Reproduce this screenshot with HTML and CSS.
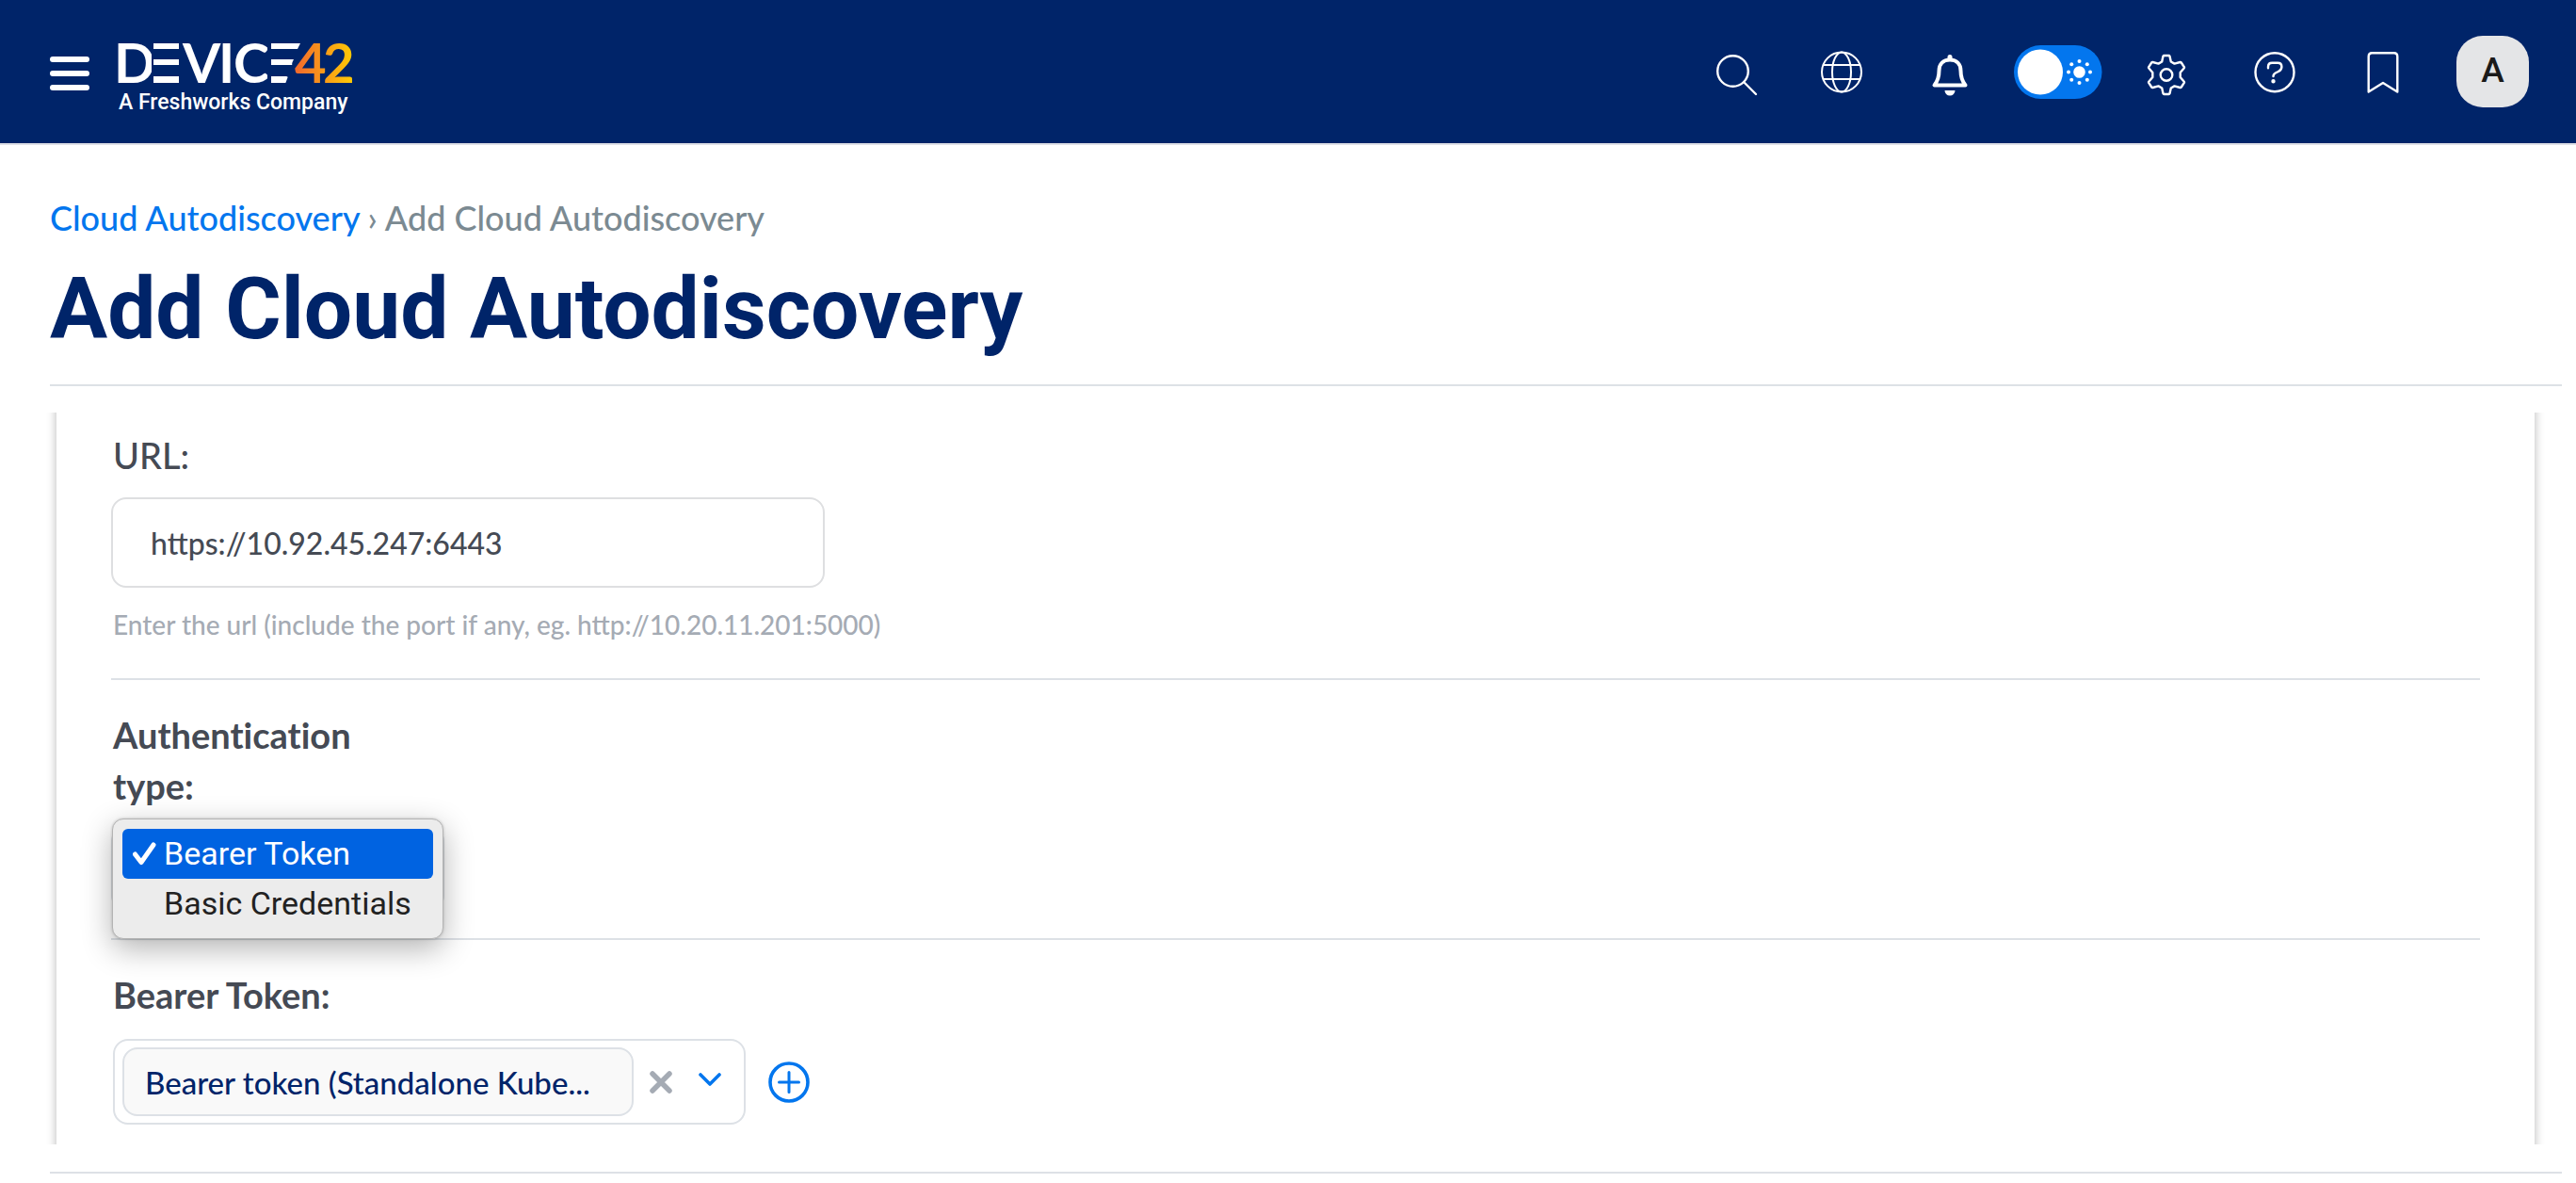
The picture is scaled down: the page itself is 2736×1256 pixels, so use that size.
FILE: index.html
```html
<!DOCTYPE html>
<html lang="en">
<head>
<meta charset="utf-8">
<meta name="viewport" content="width=device-width, initial-scale=1">
<title>Add Cloud Autodiscovery</title>
<link rel="stylesheet" href="styles.css">
</head>
<body>
<header class="topbar">
  <button class="icon-button menu" type="button" aria-label="Menu">
    <svg width="42" height="36" viewBox="0 0 42 36" fill="#fff"><rect width="42" height="6" rx="3"/><rect y="15" width="42" height="6" rx="3"/><rect y="30" width="42" height="6" rx="3"/></svg>
  </button>
  <a class="logo" href="#" aria-label="Device42, A Freshworks Company">
    <svg width="266" height="92" viewBox="-10 0 266 92">
      <defs>
        <linearGradient id="sunrise" gradientUnits="userSpaceOnUse" x1="190" y1="0" x2="250" y2="0">
          <stop offset="0" stop-color="#f26b2c"/><stop offset="1" stop-color="#ffcb05"/>
        </linearGradient>
      </defs>
      <text class="wordmark" y="58" x="-4 33 69 107 123 158" fill="#fff">DEVICE</text>
      <g fill="#002469">
        <rect x="36" y="22" width="31" height="11"/><rect x="36" y="39" width="31" height="12"/>
        <rect x="160" y="22" width="34" height="11"/><rect x="160" y="39" width="34" height="12"/>
        <rect x="36" y="14" width="2" height="46"/><rect x="159" y="14" width="4" height="46"/>
        <polygon points="192,59 178,59 181,51 192,51"/>
      </g>
      <g fill="#fff">
        <rect x="38" y="16" width="27" height="6"/><rect x="38" y="33" width="27" height="6"/><rect x="38" y="51" width="27" height="7"/>
        <polygon points="163,16 194,16 191,22 163,22"/><polygon points="163,33 187,33 184,39 163,39"/><polygon points="163,51 180,51 177,58 163,58"/>
      </g>
      <text class="wordmark" y="58" x="188 218" fill="url(#sunrise)">42</text>
      <text class="tagline" x="1" y="86" fill="#fff">A Freshworks Company</text>
    </svg>
  </a>
  <nav class="tools" aria-label="Tools">
    <button class="icon-button tool" type="button" aria-label="Search">
      <svg width="52" height="52" viewBox="0 0 52 52" fill="none" stroke="#fff" stroke-width="2.4" stroke-linecap="round"><circle cx="25.500" cy="25.500" r="16.300"/><path d="M37.500 37.500 50 50"/></svg>
    </button>
    <button class="icon-button tool" type="button" aria-label="Language">
      <svg width="44" height="52" viewBox="0 0 44 52" fill="none" stroke="#fff" stroke-width="2"><circle cx="22" cy="26.500" r="21"/><ellipse cx="22" cy="26.500" rx="10" ry="21"/><path d="M2 19h40M2 34h40"/></svg>
    </button>
    <button class="icon-button tool" type="button" aria-label="Notifications">
      <svg width="44" height="52" viewBox="0 0 44 52" fill="none"><path d="M22 13.500c-7.500 0-11.500 5-11.500 11.500 0 7-1 10.500-5 15.500h33c-4-5-5-8.500-5-15.500 0-6.500-4-11.500-11.500-11.500z" stroke="#fff" stroke-width="4" stroke-linejoin="round"/><path d="M19.500 13v-2.500a2.500 2.500 0 0 1 5 0V13zM16.500 46h11a5.500 5.500 0 0 1-11 0z" fill="#fff"/></svg>
    </button>
    <label class="tool">
      <input class="theme-input" type="checkbox" aria-label="Light theme" checked>
      <svg width="94" height="60" viewBox="0 -2 94 60" fill="#fff"><rect width="93.500" height="57" rx="28.500" fill="#0376ee"/><circle cx="28" cy="28.500" r="24"/><circle cx="69.500" cy="28.500" r="6.300"/><circle cx="69.500" cy="17" r="2"/><circle cx="69.500" cy="40" r="2"/><circle cx="58" cy="28.500" r="2"/><circle cx="81" cy="28.500" r="2"/><circle cx="61.200" cy="20.200" r="2"/><circle cx="77.800" cy="20.200" r="2"/><circle cx="61.200" cy="36.800" r="2"/><circle cx="77.800" cy="36.800" r="2"/></svg>
    </label>
    <button class="icon-button tool" type="button" aria-label="Settings">
      <svg width="44" height="52" viewBox="0 0 44 52" fill="none" stroke="#fff" stroke-width="2.400" stroke-linejoin="round"><circle cx="22" cy="29.500" r="6.300"/><path d="M18.500 9.500Q18.800 9 19.500 9h5q.700 0 1 .700L26.800 15.500 30.500 17.600 36.500 16q.800-.200 1.300.500l3 4.600q.400.800-.200 1.400L36.700 27v5l3.900 4.500q.600.600.200 1.400l-3 4.600q-.500.700-1.300.500L30.500 41.400 26.800 43.500 25.500 49.300q-.300.700-1 .700h-5q-.700 0-1-.700L17.200 43.500 13.500 41.400 7.500 43q-.800.200-1.300-.500l-3-4.600q-.400-.800.200-1.400L7.300 32v-5L3.400 22.500q-.600-.600-.200-1.400l3-4.600q.500-.700 1.300-.500L13.500 17.600 17.200 15.500z"/></svg>
    </button>
    <button class="icon-button tool" type="button" aria-label="Help">
      <svg width="44" height="52" viewBox="0 0 44 52" fill="none" stroke="#fff" stroke-width="2.400" stroke-linecap="round" stroke-linejoin="round"><circle cx="22" cy="26.700" r="20.500"/><path d="M15 22.200v-1.200q0-4.200 4.200-4.200h6q4.200 0 4.200 4.200 0 3.200-3.600 5l-2.600 1.300q-2.700 1.400-2.700 3.700"/><circle cx="20.500" cy="36.300" r="1" fill="#fff"/></svg>
    </button>
    <button class="icon-button tool" type="button" aria-label="Bookmarks">
      <svg width="44" height="52" viewBox="0 0 44 52" fill="none" stroke="#fff" stroke-width="2.400" stroke-linejoin="round"><path d="M6.700 47.500V10q0-3.700 3.700-3.700h23.200q3.700 0 3.700 3.700v37.500L22 38z"/></svg>
    </button>
    <button class="icon-button tool account" type="button" aria-label="Account"><span class="avatar">A</span></button>
  </nav>
</header>
<main class="page">
  <nav class="breadcrumb" aria-label="Breadcrumb"><a href="#">Cloud Autodiscovery</a><span>›</span><span>Add Cloud Autodiscovery</span></nav>
  <h1>Add Cloud Autodiscovery</h1>
  <div class="viewport">
    <form class="panel">
      <div class="row">
        <label class="optional" for="url">URL:</label>
        <input class="url" id="url" type="text" value="https://10.92.45.247:6443" aria-describedby="url-hint">
        <p class="hint" id="url-hint">Enter the url (include the port if any, eg. http://10.20.11.201:5000)</p>
      </div>
      <div class="row auth">
        <label for="auth">Authentication type:</label>
        <div class="picker">
          <select id="auth"><option>Bearer Token</option><option>Basic Credentials</option></select>
          <ul class="options" role="listbox" aria-label="Authentication type">
            <li class="selected" role="option" aria-selected="true"><svg width="25" height="25" viewBox="0 0 25 25" fill="none" stroke="#fff" stroke-width="5" stroke-linecap="round" stroke-linejoin="round"><path d="M2.500 13 9 21.500 22 3"/></svg>Bearer Token</li>
            <li role="option" aria-selected="false">Basic Credentials</li>
          </ul>
        </div>
      </div>
      <div class="row token">
        <label for="token">Bearer Token:</label>
        <div class="token-line">
          <div class="token-box">
            <input class="chip" id="token" type="text" value="Bearer token (Standalone Kube..." readonly>
            <button class="icon-button" type="button" aria-label="Clear"><svg width="26" height="26" viewBox="0 0 26 26" stroke="#a5abb4" stroke-width="5.500" stroke-linecap="round"><path d="M4 4l18 18M22 4 4 22"/></svg></button>
            <button class="icon-button expand" type="button" aria-label="Show options"><svg width="26" height="24" viewBox="0 0 26 24" fill="none" stroke="#0376ee" stroke-width="3.600" stroke-linecap="round" stroke-linejoin="round"><path d="M3 4l10 10L23 4"/></svg></button>
          </div>
          <button class="icon-button" type="button" aria-label="Add token"><svg width="44" height="44" viewBox="0 0 44 44" fill="none" stroke="#0376ee" stroke-width="3.600" stroke-linecap="round"><circle cx="22" cy="22" r="20"/><path d="M22 11.500v21M11.500 22h21" stroke-width="3"/></svg></button>
        </div>
      </div>
    </form>
  </div>
</main>
</body>
</html>
```
FILE: styles.css
```css
* { box-sizing: border-box; }
body { margin: 0; background: #fff; color: #454a54; font-family: Lato, sans-serif; }
svg { display: block; }

.icon-button { display: flex; align-items: center; justify-content: center; padding: 0; border: 0; background: none; cursor: pointer; }

.topbar { display: flex; align-items: center; height: 154px; padding: 0 29px 0 53px; background: #002469; border-bottom: 2px solid #dee0e6; }
.menu { margin-top: 4px; }
.logo { margin-left: 20px; }
.wordmark { font: 700 58px Lato, sans-serif; }
.tagline { font: 500 23px Roboto, sans-serif; }
.tools { display: flex; align-items: center; margin-left: auto; }
.tool { display: flex; justify-content: center; width: 115px; }
.theme-input { appearance: none; width: 0; height: 0; margin: 0; }
.account { width: 119px; }
.avatar { width: 77px; height: 76px; border-radius: 28px; background: #e4e5e7; color: #1a1a1a; font: 500 37px/74px Roboto, sans-serif; text-align: center; }

.page { padding: 55px 15px 10px 53px; }
.breadcrumb { display: flex; gap: 8px; font-size: 36px; line-height: 44px; color: #7b8a92; font-weight: 500; }
.breadcrumb a { color: #0376ee; text-decoration: none; }
h1 { margin: 21px 0 0; padding-bottom: 26px; color: #002469; font: 700 91px/108px Roboto, sans-serif; }

.viewport { padding: 28px 29px 29px 7px; border: solid #dde1e6; border-width: 2px 0; }
.panel { margin: -28px 0 -29px; padding: 46px 58px 50px; box-shadow: 0 0 10px rgba(0, 0, 0, 0.28); clip-path: inset(28px -16px 29px); }

.row { display: flex; flex-direction: column; align-items: flex-start; padding-bottom: 40px; border-bottom: 2px solid #dde1e6; }
.row label { padding-left: 2px; font-size: 38px; line-height: 54px; font-weight: 700; font-variant-ligatures: none; }
.row .optional { font-weight: 500; }
.row.auth { padding: 31px 0 0; }
.row.token { padding: 31px 0 0; border: 0; }
.auth label { max-width: 280px; }

.url { width: 758px; height: 96px; margin-top: 18px; padding: 0 40px; border: 2px solid #dedfe1; border-radius: 16px; background: #fff; color: #454a54; font: 500 32px Lato, sans-serif; }
.hint { margin: 22px 0 0; padding-left: 2px; font-size: 28px; line-height: 34px; font-weight: 500; color: #a5abb4; }

.picker { position: relative; height: 127px; margin-top: 8px; padding-top: 8px; }
.picker select { width: 354px; height: 90px; border: 2px solid #dde1e6; border-radius: 16px; background: #fff; font: 34px Roboto, sans-serif; }
.options { position: absolute; top: 0; left: 1px; width: 352px; margin: 0; padding: 10px; list-style: none; border: 1px solid #b4b4b4; border-radius: 12px; background: #ececec; box-shadow: 0 10px 32px rgba(0, 0, 0, 0.3), 0 0 3px rgba(0, 0, 0, 0.2); color: #222; font: 34px/53px Roboto, sans-serif; }
.options li { display: flex; align-items: center; gap: 8px; padding-left: 44px; border-radius: 6px; }
.options .selected { padding-left: 11px; background: #0063e1; color: #fff; }

.token-line { display: flex; align-items: center; gap: 24px; margin: 20px 2px 0; }
.token-box { display: flex; align-items: center; gap: 16px; width: 672px; height: 91px; padding: 0 8px; border: 2px solid #dde1e6; border-radius: 16px; }
.chip { width: 543px; height: 73px; padding: 0 22px; border: 2px solid #dde1e6; border-radius: 16px; background: #f9f9f9; color: #002469; font: 500 33px Lato, sans-serif; }
.expand { margin-left: 10px; }
```
